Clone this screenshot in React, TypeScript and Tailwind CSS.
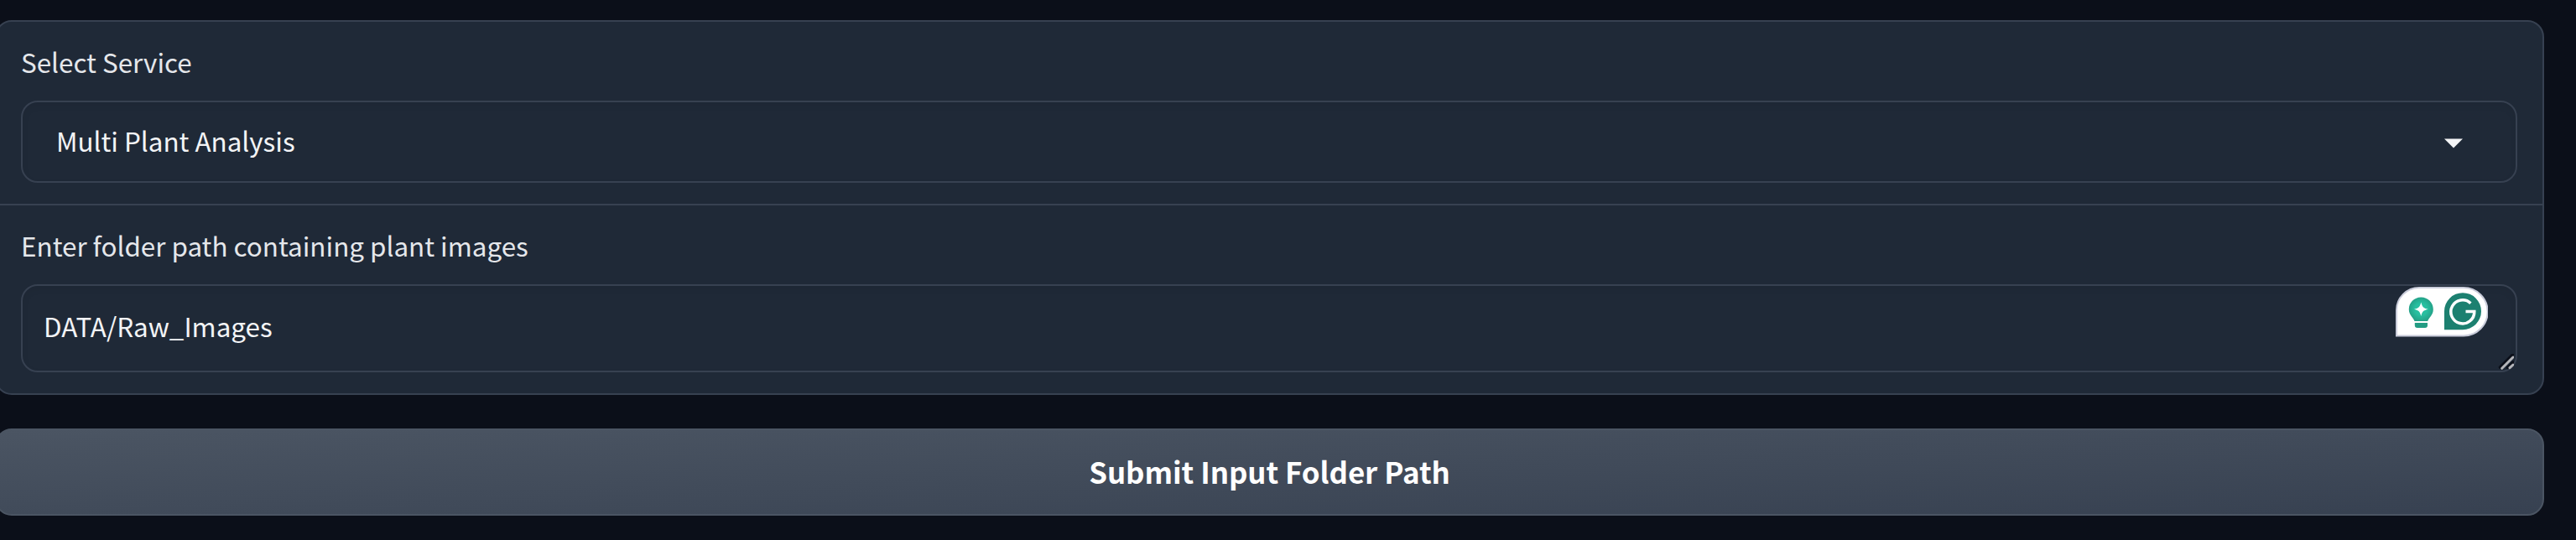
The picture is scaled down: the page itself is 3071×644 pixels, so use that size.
import React from "react";

function Label({ children }: { children: React.ReactNode }) {
  return <div className="h-[42px] text-[31.4px] leading-[42px] text-[#e5e7eb] whitespace-nowrap">{children}</div>;
}

function AssistantBadge() {
  return (
    <svg className="absolute left-[2856px] top-[342px]" width="110" height="60" viewBox="0 0 110 60" fill="none">
      <defs>
        <radialGradient id="bulb" cx="0.5" cy="0.5" r="0.55">
          <stop offset="0.45" stopColor="#28bfa0" />
          <stop offset="1" stopColor="#239c83" />
        </radialGradient>
      </defs>
      <path d="M1 58.5V28A27 27 0 0 1 28 1H81A28.7 28.7 0 0 1 81 58.5Z" fill="#fff" stroke="#c9ccda" strokeWidth="2" />
      <path d="M30.3 12.5C38.6 12.5 44.800 19 44.800 27C44.800 34 39.500 36.500 38.200 41H22.500C21.200 36.500 15.800 34 15.800 27C15.800 19 22 12.5 30.300 12.500Z" fill="url(#bulb)" />
      <path d="M22.800 43H38V46A3 3 0 0 1 35 49H25.800A3 3 0 0 1 22.800 46Z" fill="#239c83" />
      <path d="M30.300 18.500C31.900 24.300 32.800 25.200 38.600 26.800C32.800 28.400 31.900 29.300 30.300 35.100C28.700 29.300 27.800 28.400 22 26.800C27.800 25.200 28.700 24.300 30.300 18.500Z" fill="#fff" />
      <path d="M58 51.200V29.200A22 22 0 1 1 80 51.200Z" fill="#1c8070" />
      <path d="M89.400 19.700A14 14 0 1 0 93.800 29.500H83.500" stroke="#fff" strokeWidth="3.500" />
    </svg>
  );
}

export default function App() {
  return (
    <main className="relative h-[644px] w-full overflow-hidden bg-[#0b0f19] pt-[24px] font-['Noto_Sans_CJK_SC',sans-serif]">
      <section className="-ml-[6px] mr-[38px] h-[447px] rounded-[20px] border-2 border-[#374151] bg-[#1f2937]">
        <div className="h-[219px] border-b-2 border-[#374151] pl-[29px] pr-[30px] pt-[27px]">
          <Label>Select Service</Label>
          <div className="mt-[25px] flex h-[98px] items-center justify-between rounded-[20px] border-2 border-[#374151] pl-[40px] pr-[63px] shadow-[inset_0_4px_8px_rgba(0,0,0,0.05)]">
            <span className="pb-[2px] text-[31.4px] leading-[42px] text-[#f3f4f6]">Multi Plant Analysis</span>
            <svg className="mt-[3px]" width="22" height="12" viewBox="0 0 22 12"><path d="M0 0.500H22L11 11.500Z" fill="#f3f4f6" /></svg>
          </div>
        </div>
        <div className="pl-[29px] pr-[30px] pt-[27px]">
          <Label>Enter folder path containing plant images</Label>
          <div className="relative mt-[25px] flex h-[105px] items-center rounded-[20px] border-2 border-[#374151] pl-[25px] shadow-[inset_0_4px_8px_rgba(0,0,0,0.05)]">
            <span className="pb-[5px] text-[31.4px] leading-[42px] text-[#f3f4f6]">DATA/Raw_Images</span>
            <svg className="absolute bottom-0 right-[2px]" width="20" height="20" viewBox="0 0 20 20" fill="none">
              <path d="M3.500 16L18.500 1M12.500 16.500L19 10" stroke="#0b0f19" strokeWidth="3.500" strokeLinecap="round" />
              <path d="M5.700 17.300L19 4M15 16.700L19 13" stroke="#b4b5b9" strokeWidth="3" strokeLinecap="round" />
            </svg>
          </div>
        </div>
      </section>
      <button className="-ml-[6px] mt-[40px] flex h-[104px] w-[3039px] items-center justify-center rounded-[20px] border-2 border-[#4b5563] bg-[linear-gradient(to_bottom_right,#4b5563,#374151)] pb-[2px] text-[34.8px] font-semibold leading-[48px] text-white">
        Submit Input Folder Path
      </button>
      <AssistantBadge />
    </main>
  );
}
